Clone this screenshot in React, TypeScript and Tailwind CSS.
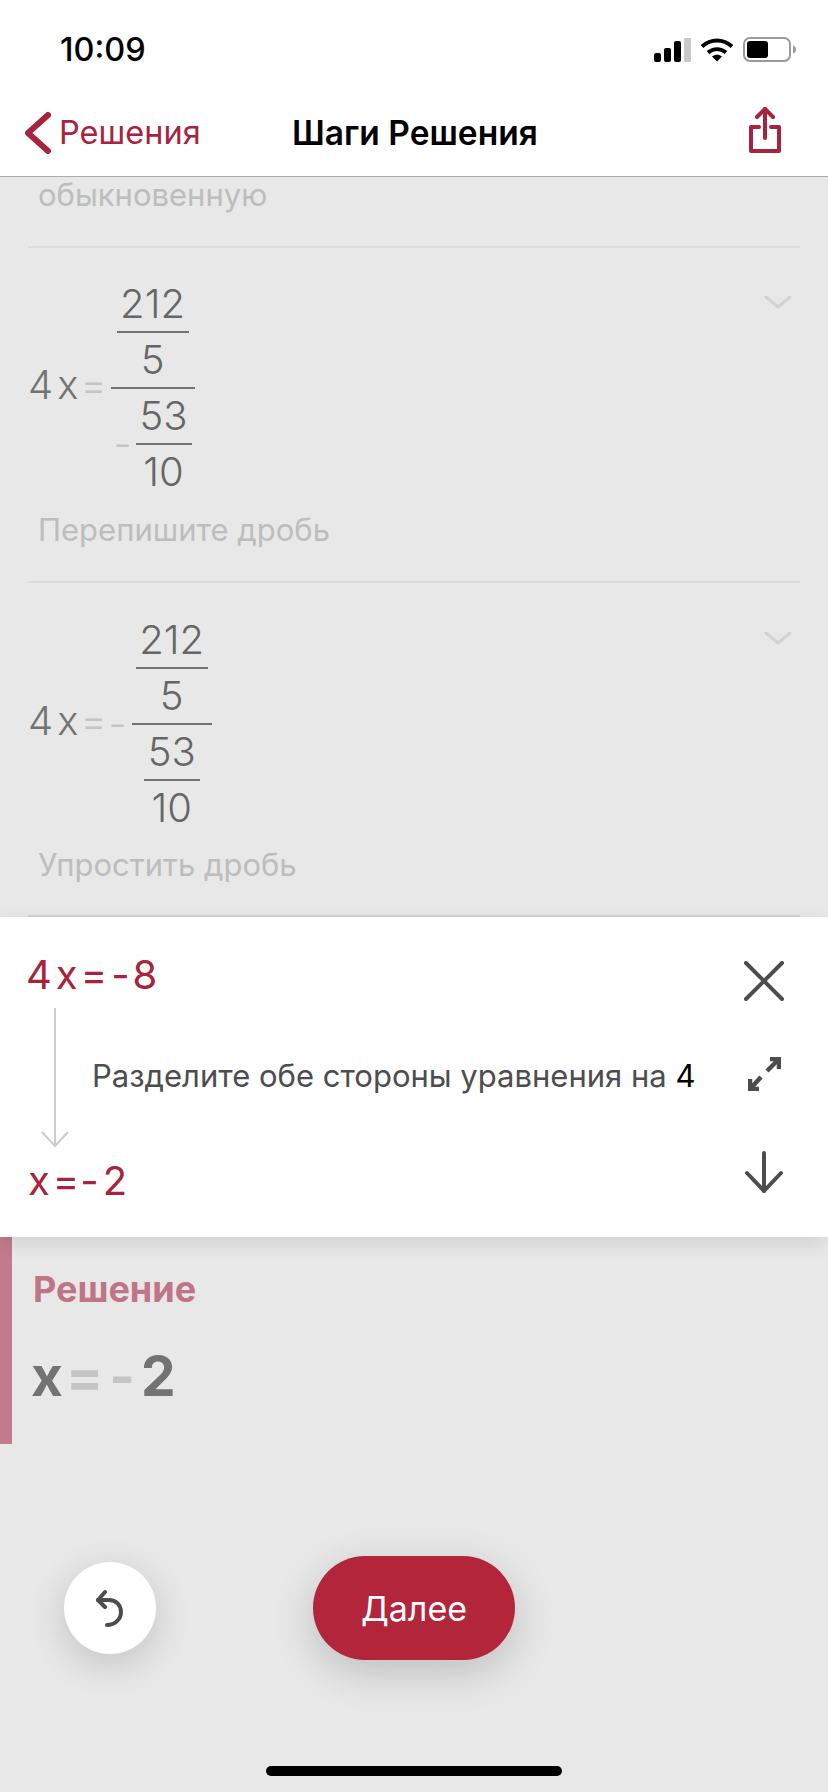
import type { ReactNode } from 'react'

const dim = 'text-[#737373]'
const light = 'text-[#c4c4c4]'

function Num({ children }: { children: ReactNode }) {
  return <div className="h-[54px] text-center text-[40px] font-light leading-[54px] text-[#666666]">{children}</div>
}

function Frac({ top, bottom, width }: { top: ReactNode; bottom: ReactNode; width: string }) {
  return (
    <div className={`flex flex-col items-center ${width}`}>
      <div className="w-full">{top}</div>
      <div className="h-[2px] w-full bg-[#737373]" />
      <div className="w-full">{bottom}</div>
    </div>
  )
}

function Chevron() {
  return (
    <svg width="28" height="14" viewBox="0 0 28 14" fill="none" stroke="#d2d2d2" strokeWidth="3" strokeLinecap="round" strokeLinejoin="round">
      <path d="M2 2l12 10L26 2" />
    </svg>
  )
}

function StepRow({ minusInside, note, height, top, noteGap }: { minusInside: boolean; note: string; height: string; top: string; noteGap: string }) {
  const inner = <Frac width="w-[72px]" top={<Num>212</Num>} bottom={<Num>5</Num>} />
  const small = <Frac width="w-[56px]" top={<Num>53</Num>} bottom={<Num>10</Num>} />
  return (
    <div className={`flex flex-col ${height}`}>
      <div className={`flex items-start justify-between pr-[8px] ${top}`}>
        <div className="flex items-center text-[40px] font-light leading-none">
          <div className="mb-[6px] flex items-center">
            <span className={dim}>4</span>
            <span className={`ml-[4px] ${dim}`}>x</span>
            <span className={`ml-[2px] ${light}`}>=</span>
          </div>
          {minusInside ? (
            <div className="ml-[4px]">
              <Frac
                width="w-[84px]"
                top={<div className="flex justify-center">{inner}</div>}
                bottom={
                  <div className="flex items-center justify-end pr-[3px]">
                    <span className={`mr-[4px] ${light}`}>-</span>
                    {small}
                  </div>
                }
              />
            </div>
          ) : (
            <>
              <span className={`ml-[2px] mr-[5px] ${light}`}>-</span>
              <Frac
                width="w-[80px]"
                top={<div className="flex justify-center">{inner}</div>}
                bottom={<div className="flex justify-center">{small}</div>}
              />
            </>
          )}
        </div>
        <div className="mt-[18px]">
          <Chevron />
        </div>
      </div>
      <p className={`pl-[10px] text-[31px] leading-[36px] text-[#bdbdbd] ${noteGap}`}>{note}</p>
    </div>
  )
}

export default function App() {
  return (
    <div className="relative flex h-[1792px] w-[828px] flex-col overflow-hidden bg-[#e8e8e8] font-['Inter',sans-serif]">
      {/* status + nav */}
      <div className="h-[177px] shrink-0 border-b border-[#ababab] bg-white">
        <div className="flex h-[100px] items-start justify-between pl-[60px] pr-[32px] pt-[30px]">
          <span className="text-[32.5px] font-medium leading-[40px] text-black">10:09</span>
          <div className="flex items-center gap-[9px] pt-[7px]">
            <svg width="37" height="24" viewBox="0 0 37 24">
              <rect x="0" y="15" width="7" height="9" rx="2" fill="#000" />
              <rect x="10" y="10" width="7" height="14" rx="2" fill="#000" />
              <rect x="20" y="3" width="7" height="21" rx="2" fill="#000" />
              <rect x="30" y="0" width="7" height="24" rx="1" fill="#c9c9c9" />
            </svg>
            <svg width="34" height="24" viewBox="0 0 34 24" fill="none" stroke="#000" strokeWidth="4">
              <path d="M2 8.5c9-8 21-8 30 0" />
              <path d="M8 14.5c5.500-4.500 12.500-4.500 18 0" />
              <path d="M17 23.500l-5-5c3-2.500 7-2.500 10 0z" fill="#000" stroke="none" />
            </svg>
            <svg width="53" height="25" viewBox="0 0 53 25" fill="none">
              <rect x="1" y="1" width="46" height="23" rx="6" stroke="#9a9a9a" strokeWidth="2" />
              <rect x="4" y="4" width="21" height="17" rx="3" fill="#000" />
              <path d="M50 8.500c2 .6 3 2 3 4s-1 3.400-3 4z" fill="#9a9a9a" />
            </svg>
          </div>
        </div>
        <div className="relative flex h-[76px] items-center justify-between pb-[10px] pl-[25px] pr-[47px]">
          <div className="flex items-center gap-[8px]">
            <svg width="26" height="42" viewBox="0 0 26 42" fill="none" stroke="#a6243d" strokeWidth="6" strokeLinecap="round" strokeLinejoin="round">
              <path d="M23 3L3 21l20 18" />
            </svg>
            <span className="text-[32.5px] leading-[40px] text-[#a6243d]">Решения</span>
          </div>
          <span className="absolute left-[292px] top-[13px] text-[33.5px] font-semibold leading-[40px] text-black">Шаги Решения</span>
          <svg className="mb-[6px]" width="32" height="46" viewBox="0 0 32 46" fill="none" stroke="#a6243d" strokeWidth="4" strokeLinecap="round" strokeLinejoin="round">
            <path d="M10 20H2v24h28V20h-8" />
            <path d="M16 31V2" />
            <path d="M8 10l8-8 8 8" />
          </svg>
        </div>
      </div>

      {/* earlier steps, scrolled under the header */}
      <div className="h-[740px] shrink-0 px-[28px]">
        <div className="h-[71px] border-b-2 border-[#dcdcdc]">
          <p className="pl-[10px] text-[31px] leading-[36px] text-[#bdbdbd]">обыкновенную</p>
        </div>
        <div className="border-b-2 border-[#dcdcdc]">
          <StepRow minusInside note="Перепишите дробь" height="h-[333px]" top="pt-[29px]" noteGap="mt-[13px]" />
        </div>
        <div className="border-b-2 border-[#d2d2d2]">
          <StepRow minusInside={false} note="Упростить дробь" height="h-[332px]" top="pt-[30px]" noteGap="mt-[12px]" />
        </div>
      </div>

      {/* active step */}
      <div className="relative z-10 flex h-[320px] shrink-0 bg-white pl-[28px] pr-[44px] pt-[34px] shadow-[0_6px_18px_rgba(0,0,0,0.1)]">
        <div className="flex w-[64px] shrink-0 flex-col items-start">
          <span className="-ml-[2px] whitespace-nowrap text-[40px] leading-[48px] text-[#a6243d]">4<span className="ml-[4px]">x</span><span className="ml-[3px]">=</span><span className="ml-[4px]">-</span><span className="ml-[3px]">8</span></span>
          <svg className="ml-[13px] mt-[9px]" width="28" height="140" viewBox="0 0 28 140" fill="none" stroke="#cccccc" strokeWidth="2">
            <path d="M14 0v138" />
            <path d="M1 124l13 14 13-14" />
          </svg>
          <span className="mt-[9px] whitespace-nowrap text-[40px] leading-[48px] text-[#a6243d]">x<span className="ml-[3px]">=</span><span className="ml-[1px]">-</span><span className="ml-[4px]">2</span></span>
        </div>
        <div className="flex flex-1 items-center pb-[36px]">
          <p className="whitespace-nowrap text-[31px] leading-[40px] text-[#4d4d4f]">
            Разделите обе стороны уравнения на <span className="text-black">4</span>
          </p>
        </div>
        <div className="flex w-[40px] shrink-0 flex-col items-center pt-[10px]">
          <svg width="40" height="40" viewBox="0 0 40 40" fill="none" stroke="#4d4d4f" strokeWidth="4" strokeLinecap="round">
            <path d="M2 2l36 36M38 2L2 38" />
          </svg>
          <svg className="mt-[56px]" width="33" height="34" viewBox="0 0 33 34" fill="none" stroke="#4d4d4f" strokeWidth="4.500">
            <path d="M22 2h9v10" />
            <path d="M30 3L19 14" />
            <path d="M11 32H2V22" />
            <path d="M3 31l10-11" />
          </svg>
          <svg className="mt-[60px]" width="38" height="42" viewBox="0 0 38 42" fill="none" stroke="#4d4d4f" strokeWidth="4" strokeLinecap="round" strokeLinejoin="round">
            <path d="M19 2v38" />
            <path d="M2 22l17 18 17-18" />
          </svg>
        </div>
      </div>

      {/* answer */}
      <div className="h-[207px] w-full shrink-0 border-l-[12px] border-[#c27a8c] pl-[19px] pt-[30px]">
        <p className="pl-[2px] text-[36px] font-bold leading-[44px] text-[#bf7488]">Решение</p>
        <div className="mt-[30px] flex items-center text-[55px] font-bold leading-[70px]">
          <span className={dim}>x</span>
          <span className={`ml-[3px] ${light}`}>=</span>
          <span className={`ml-[6px] ${light}`}>-</span>
          <span className={`ml-[6px] ${dim}`}>2</span>
        </div>
      </div>

      {/* actions */}
      <div className="flex items-center pl-[64px] pt-[112px]">
        <button className="flex h-[92px] w-[92px] items-center justify-center rounded-full bg-white shadow-[0_10px_36px_rgba(0,0,0,0.16)]">
          <svg width="28" height="38" viewBox="0 0 28 38" fill="none" stroke="#4d4d4f" strokeWidth="4" strokeLinecap="round" strokeLinejoin="round">
            <path d="M9 3l-7 8 7 7" />
            <path d="M2 11h11c7 0 12 5 12 12s-6 13-14 13" />
          </svg>
        </button>
        <button className="ml-[157px] h-[104px] w-[202px] rounded-[52px] bg-[#b2253b] text-[34px] text-white shadow-[0_12px_40px_rgba(0,0,0,0.18)]">
          Далее
        </button>
      </div>

      {/* home indicator */}
      <div className="absolute left-[266px] top-[1766px] h-[10px] w-[296px] rounded-full bg-black" />
    </div>
  )
}
